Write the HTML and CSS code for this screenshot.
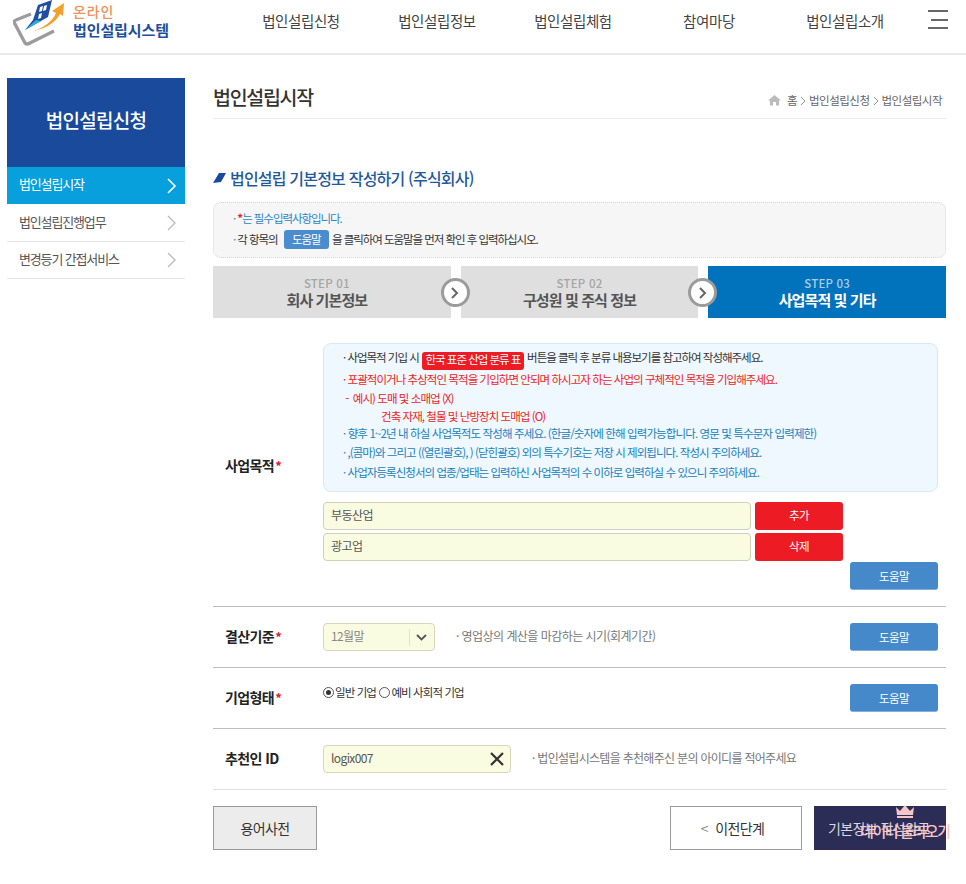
FILE: index.html
```html
<!DOCTYPE html>
<html lang="ko">
<head>
<meta charset="utf-8">
<title>법인설립시작</title>
<link rel="stylesheet" href="styles.css">
</head>
<body>
<header class="top">
  <a class="logo">
    <svg class="logo-mark" width="54" height="48" viewBox="0 0 54 48">
      <path d="M18 14 L3 20 Q0 21 2 24 L12 43 Q14 45 17 43 L41 31" fill="none" stroke="#9c9c9c" stroke-width="3.4"/>
      <path d="M25 5 L39 0 L35 17 L12 30 L20 20 Z" fill="#1f4ea3"/>
      <path d="M12 30 L23 20 L28 21 Z" fill="#2bb0dc"/>
      <path d="M27 7 L30 6 L29 11 L26 12 Z M31 6 L34 5 L33 10 L30 11 Z M26 14 L29 13 L28 18 L25 19 Z" fill="#fff"/>
      <path d="M20 31 Q38 25 43 13 L39 11 L51 3 L50 16 L47 14 Q40 27 20 31 Z" fill="#f2a02d"/>
    </svg>
    <span class="logo-text"><span class="logo-small">온라인</span><span class="logo-big">법인설립시스템</span></span>
  </a>
  <nav class="gnb">
    <a>법인설립신청</a><a>법인설립정보</a><a>법인설립체험</a><a>참여마당</a><a>법인설립소개</a>
  </nav>
  <button class="burger" aria-label="메뉴"><span></span><span></span><span></span></button>
</header>

<div class="wrap">
  <aside class="side">
    <h2 class="side-title">법인설립신청</h2>
    <ul class="side-menu">
      <li class="on"><span>법인설립시작</span><svg class="chev" width="12" height="16" viewBox="0 0 12 16"><path d="M2 1 L9 8 L2 15" fill="none" stroke="#fff" stroke-width="1.6"/></svg></li>
      <li><span>법인설립진행업무</span><svg class="chev" width="12" height="16" viewBox="0 0 12 16"><path d="M2 1 L9 8 L2 15" fill="none" stroke="#bbb" stroke-width="1.4"/></svg></li>
      <li><span>변경등기 간접서비스</span><svg class="chev" width="12" height="16" viewBox="0 0 12 16"><path d="M2 1 L9 8 L2 15" fill="none" stroke="#bbb" stroke-width="1.4"/></svg></li>
    </ul>
  </aside>

  <main class="main">
    <div class="page-head">
      <h1>법인설립시작</h1>
      <div class="crumb">
        <svg width="13" height="12" viewBox="0 0 13 12"><path d="M6.5 1 L13 6.5 L11 6.5 L11 11.5 L8 11.5 L8 8 L5 8 L5 11.5 L2 11.5 L2 6.5 L0 6.5 Z" fill="#bbb"/></svg>
        <span class="crumb-home">홈</span>
        <svg class="crumb-sep" width="6" height="10" viewBox="0 0 6 10"><path d="M1 1 L5 5 L1 9" fill="none" stroke="#888" stroke-width="0.9"/></svg>
        <span>법인설립신청</span>
        <svg class="crumb-sep" width="6" height="10" viewBox="0 0 6 10"><path d="M1 1 L5 5 L1 9" fill="none" stroke="#888" stroke-width="0.9"/></svg>
        <span>법인설립시작</span>
      </div>
    </div>

    <h3 class="sec-title"><svg width="13" height="10" viewBox="0 0 13 10"><path d="M6 0 L13 0 L8 9 L0 10 Z" fill="#1a4a9c"/></svg>법인설립 기본정보 작성하기 (주식회사)</h3>

    <div class="notice">
      <p class="n-blue">· <em>*</em>는 필수입력사항입니다.</p>
      <p><span class="n-dot">·</span> 각 항목의 <span class="help-chip">도움말</span> 을 클릭하여 도움말을 먼저 확인 후 입력하십시오.</p>
    </div>

    <div class="steps">
      <div class="step step-one"><small>STEP 01</small><b>회사 기본정보</b><span class="step-arrow"><svg width="12" height="14" viewBox="0 0 12 14"><path d="M3 2 L8 7 L3 12" fill="none" stroke="#666" stroke-width="2"/></svg></span></div>
      <div class="step"><small>STEP 02</small><b>구성원 및 주식 정보</b><span class="step-arrow"><svg width="12" height="14" viewBox="0 0 12 14"><path d="M3 2 L8 7 L3 12" fill="none" stroke="#666" stroke-width="2"/></svg></span></div>
      <div class="step current"><small>STEP 03</small><b>사업목적 및 기타</b></div>
    </div>

    <section class="row row-first">
      <div class="label">사업목적<em>*</em></div>
      <div class="field">
        <div class="guide">
          <p class="g-blk g1">· 사업목적 기입 시 <span class="red-chip">한국 표준 산업 분류 표</span> 버튼을 클릭 후 분류 내용보기를 참고하여 작성해주세요.</p>
          <p class="g-red g2">· 포괄적이거나 추상적인 목적을 기입하면 안되며 하시고자 하는 사업의 구체적인 목적을 기입해주세요.</p>
          <p class="g-red g3">&nbsp;- &nbsp;예시) 도매 및 소매업 (X)</p>
          <p class="g-red g4">건축 자재, 철물 및 난방장치 도매업 (O)</p>
          <p class="g-blue g5">· 향후 1~2년 내 하실 사업목적도 작성해 주세요. (한글/숫자에 한해 입력가능합니다. 영문 및 특수문자 입력제한)</p>
          <p class="g-blue g6">· ,(콤마)와 그리고 ((열린괄호), ) (닫힌괄호) 외의 특수기호는 저장 시 제외됩니다. 작성시 주의하세요.</p>
          <p class="g-blue">· 사업자등록신청서의 업종/업태는 입력하신 사업목적의 수 이하로 입력하실 수 있으니 주의하세요.</p>
        </div>
        <div class="purpose"><input class="inp" value="부동산업"><button class="btn-red">추가</button></div>
        <div class="purpose"><input class="inp" value="광고업"><button class="btn-red">삭제</button></div>
        <div class="help-line"><button class="btn-help">도움말</button></div>
      </div>
    </section>

    <section class="row">
      <div class="label">결산기준<em>*</em></div>
      <div class="field inline">
        <div class="select"><span>12월말</span><svg width="11" height="7" viewBox="0 0 11 7"><path d="M1 1 L5.5 5.5 L10 1" fill="none" stroke="#555" stroke-width="1.8"/></svg></div>
        <span class="hint hint-a">· 영업상의 계산을 마감하는 시기(회계기간)</span>
        <button class="btn-help push">도움말</button>
      </div>
    </section>

    <section class="row">
      <div class="label">기업형태<em>*</em></div>
      <div class="field inline top-al">
        <label class="radios"><span class="radio checked"></span>일반 기업 <span class="radio"></span>예비 사회적 기업</label>
        <button class="btn-help push">도움말</button>
      </div>
    </section>

    <section class="row row-id">
      <div class="label">추천인 ID</div>
      <div class="field inline">
        <div class="idbox"><span>logix007</span><svg width="14" height="14" viewBox="0 0 14 14"><path d="M1 1 L13 13 M13 1 L1 13" stroke="#333" stroke-width="2.2"/></svg></div>
        <span class="hint hint-b">· 법인설립시스템을 추천해주신 분의 아이디를 적어주세요</span>
      </div>
    </section>

    <div class="actions">
      <button class="btn-dict">용어사전</button>
      <div class="act-right">
        <button class="btn-prev"><i>&lt;</i> 이전단계</button>
        <button class="btn-done">기본정보 작성완료
          <span class="overlay">
            <svg width="20" height="13" viewBox="0 0 20 13"><path d="M1 2 L5 6 L10 0 L15 6 L19 2 L18 10 L2 10 Z M2 11 H18 V13 H2 Z" fill="#f6c6c6"/></svg>
            <span>데이터 불러오기</span>
          </span>
        </button>
      </div>
    </div>
  </main>
</div>
</body>
</html>
```

FILE: styles.css
```css
* { box-sizing: border-box; }
html, body { margin: 0; padding: 0; background: #fff; overflow-x: hidden; }
body {
  font-family: "Noto Sans CJK KR", "Noto Sans", sans-serif;
  color: #333;
  font-size: 12px;
  letter-spacing: -0.6px;
  height: 884px;
}
p, h1, h2, h3, ul { margin: 0; padding: 0; }
em { font-style: normal; }
i { font-style: normal; }
button { font-family: inherit; letter-spacing: inherit; cursor: pointer; }

.top {
  display: flex;
  height: 55px;
  border-bottom: 2px solid #eaeaea;
}
.logo { display: flex; width: 233px; padding: 0 0 0 13px; }
.logo-mark { flex: none; margin-right: 6px; }
.logo-text { display: flex; flex-direction: column; padding-top: 3px; }
.logo-small { font-size: 14px; line-height: 17px; font-weight: 500; color: #f0905a; letter-spacing: 0.9px; }
.logo-big { font-size: 15px; line-height: 19px; font-weight: 700; color: #1e4f9e; letter-spacing: -0.1px; }
.gnb { display: flex; width: 680px; }
.gnb a { width: 136px; text-align: center; font-size: 14.5px; line-height: 41px; color: #444; letter-spacing: -0.4px; }
.burger {
  margin: 10px 0 0 15px;
  padding: 0;
  width: 20px;
  height: 19px;
  border: 0;
  background: none;
  display: flex;
  flex-direction: column;
  justify-content: space-between;
}
.burger span { display: block; height: 2px; background: #666; }
.burger span:nth-child(2) { width: 17px; margin-left: 3px; }

.wrap { display: flex; padding: 23px 20px 0 7px; }
.side { width: 178px; flex: none; }
.side-title {
  height: 89px;
  background: #1a4a9c;
  color: #fff;
  font-size: 19px;
  font-weight: 500;
  line-height: 83px;
  text-align: center;
  letter-spacing: -0.7px;
}
.side-menu { list-style: none; }
.side-menu li {
  height: 37px;
  display: flex;
  justify-content: space-between;
  align-items: center;
  padding: 0 7px 0 12px;
  border-bottom: 1px solid #e6e6e6;
  color: #555;
  font-size: 13px;
  letter-spacing: -1.15px;
}
.side-menu li span { margin-top: -4px; }
.side-menu li.on { background: #089fdd; color: #fff; border-bottom: 0; margin-bottom: 1px; }

.main { margin-left: 28px; width: 733px; }
.page-head {
  display: flex;
  justify-content: space-between;
  height: 41px;
  border-bottom: 1px solid #eaeaea;
}
.page-head h1 { font-size: 19.5px; font-weight: 500; color: #333; line-height: 38px; letter-spacing: -1.3px; }
.crumb { display: flex; align-items: center; gap: 3px; height: 43px; padding: 0 4px 0 0; font-size: 11.5px; color: #666; letter-spacing: -0.5px; }
.crumb-home { margin-left: 3px; }
.crumb-sep { margin-top: 2px; }

.sec-title {
  margin-top: 47px;
  font-size: 16px;
  line-height: 24px;
  font-weight: 500;
  color: #1f5a9c;
  letter-spacing: -0.8px;
  display: flex;
  align-items: center;
  gap: 4px;
}
.notice {
  margin-top: 12px;
  height: 56px;
  background: #f6f6f6;
  border: 1px dotted #d5d5d5;
  border-radius: 8px;
  padding: 6px 0 0 19px;
  font-size: 11.5px;
  color: #333;
  letter-spacing: -1.05px;
}
.notice p { line-height: 19px; }
.notice p + p { margin-top: 2px; }
.n-blue { color: #2b86c8; }
.n-blue em { color: #e8202a; font-weight: 700; }
.n-dot { color: #2b86c8; }
.help-chip {
  display: inline-block;
  width: 45px;
  height: 19px;
  line-height: 18px;
  margin: 0 1px 0 4px;
  text-align: center;
  color: #fff;
  background: #4a8ccd;
  border-radius: 3px;
}

.steps { margin-top: 8px; display: flex; gap: 10px; }
.step {
  position: relative;
  flex: 1;
  height: 52px;
  background: #dfdfdf;
  text-align: center;
  padding-top: 10px;
}
.step small { display: block; font-size: 11.5px; line-height: 14px; font-weight: 500; color: #a5a5a5; letter-spacing: 0.2px; }
.step b { display: block; font-size: 15px; line-height: 20px; font-weight: 700; color: #555; letter-spacing: -0.9px; }
.step-one small, .step-one b { margin-right: 10px; }
.step.current { background: #0172bc; }
.step.current small { color: #a9cdea; }
.step.current b { color: #fff; }
.step-arrow {
  position: absolute;
  top: 12px;
  right: -19px;
  width: 29px;
  height: 29px;
  border-radius: 50%;
  border: 3px solid #9b9b9b;
  background: #fff;
  display: flex;
  align-items: center;
  justify-content: center;
  z-index: 1;
}

.row {
  display: flex;
  align-items: center;
  padding: 16px 0;
  border-top: 1px solid #bdbdbd;
}
.row-first { padding-top: 25px; border-top: 0; }
.row-id { border-bottom: 1px solid #dedede; }
.label {
  width: 110px;
  flex: none;
  padding: 0 0 3px 12px;
  font-size: 14px;
  font-weight: 700;
  color: #222;
  letter-spacing: -0.6px;
}
.label em { color: #d8202a; margin-left: 1px; font-size: 13px; }
.field { flex: 1; padding-right: 8px; }
.field.inline { display: flex; align-items: center; min-height: 28px; }
.field.top-al { align-items: flex-start; }

.guide {
  height: 149px;
  background: #eef8fe;
  border: 1px solid #d6e9f5;
  border-radius: 8px;
  padding: 4px 0 0 19px;
  font-size: 11.5px;
  letter-spacing: -0.95px;
  line-height: 19px;
}
.guide p { height: 19px; }
.g-blk { color: #333; }
.g-red { color: #f01c24; }
.g-blue { color: #2080bd; }
.guide .g1 { height: 22px; letter-spacing: -1.02px; }
.guide .g3 { height: 18px; }
.guide .g4 { padding-left: 38px; height: 17px; }
.guide .g5 { letter-spacing: -0.88px; }
.guide .g6 { height: 20px; }
.red-chip {
  display: inline-block;
  width: 102px;
  height: 18px;
  line-height: 15px;
  vertical-align: -2px;
  text-align: center;
  background: #ed1c24;
  color: #fff;
  border-radius: 3px;
  margin: 0 1px;
}

.purpose { display: flex; gap: 4px; margin-top: 3px; }
.guide + .purpose { margin-top: 10px; }
.inp {
  width: 428px;
  height: 28px;
  border: 1px solid #d0d0b8;
  border-radius: 4px;
  background: #fafce2;
  padding: 0 7px 3px;
  font: inherit;
  font-size: 12px;
  letter-spacing: -0.5px;
  color: #555;
}
.btn-red {
  width: 88px;
  height: 28px;
  border: 0;
  border-radius: 3px;
  background: #ed1c24;
  color: #fff;
  font-size: 11.5px;
  padding: 0 0 3px;
}
.help-line { display: flex; justify-content: flex-end; margin-top: 1px; }
.btn-help {
  width: 88px;
  height: 28px;
  border: 0;
  border-bottom: 1px solid #7fb0dc;
  border-radius: 3px;
  background: #4589cb;
  color: #fff;
  font-size: 11.5px;
  flex: none;
}
.push { margin-left: auto; }

.select {
  width: 112px;
  height: 28px;
  border: 1px solid #d6d6bc;
  border-radius: 4px;
  background: #fafce2;
  display: flex;
  align-items: center;
  justify-content: space-between;
  padding: 0 7px 0 7px;
  color: #888;
  font-size: 12px;
  position: relative;
}
.select span, .idbox span { margin-top: -3px; }
.select::after {
  content: "";
  position: absolute;
  right: 24px;
  top: 5px;
  height: 17px;
  border-left: 1px solid #e2e2cc;
}
.hint { color: #777; font-size: 12px; letter-spacing: -0.7px; padding-bottom: 3px; }
.hint-a { margin-left: 21px; letter-spacing: -0.55px; }
.hint-b { margin-left: 21px; }
.radios { display: flex; align-items: center; height: 16px; color: #333; font-size: 11.5px; letter-spacing: -0.9px; gap: 1px; white-space: pre; }
.radio { width: 11px; height: 11px; border: 1px solid #555; border-radius: 50%; background: #fff; display: inline-block; position: relative; }
.radio.checked::after { content: ""; position: absolute; left: 2px; top: 2px; width: 5px; height: 5px; border-radius: 50%; background: #333; }
.idbox {
  width: 188px;
  height: 28px;
  border: 1px solid #d6d6bc;
  border-radius: 4px;
  background: #fafce2;
  display: flex;
  align-items: center;
  justify-content: space-between;
  padding: 0 6px 0 7px;
  color: #555;
  font-size: 12px;
  flex: none;
}

.actions { display: flex; justify-content: space-between; margin-top: 16px; }
.act-right { display: flex; gap: 12px; }
.btn-dict {
  width: 104px;
  height: 44px;
  background: #ececec;
  border: 1px solid #9a9a9a;
  color: #333;
  font-size: 14px;
}
.btn-prev {
  width: 132px;
  height: 44px;
  background: #fff;
  border: 1px solid #9a9a9a;
  color: #333;
  font-size: 14px;
  padding: 0 7px 0 0;
}
.btn-prev i { color: #888; margin-right: 4px; }
.btn-done {
  position: relative;
  width: 132px;
  height: 44px;
  background: #2b2d56;
  border: 0;
  color: #d8d8e2;
  font-size: 14px;
  text-align: left;
  padding: 0 0 0 14px;
  white-space: nowrap;
  overflow: visible;
}
.overlay {
  position: absolute;
  left: 46px;
  top: -1px;
  color: #f8c4c4;
  font-size: 15px;
  font-weight: 500;
  letter-spacing: -1.4px;
  display: flex;
  flex-direction: column;
  align-items: center;
  line-height: 26px;
}
```
